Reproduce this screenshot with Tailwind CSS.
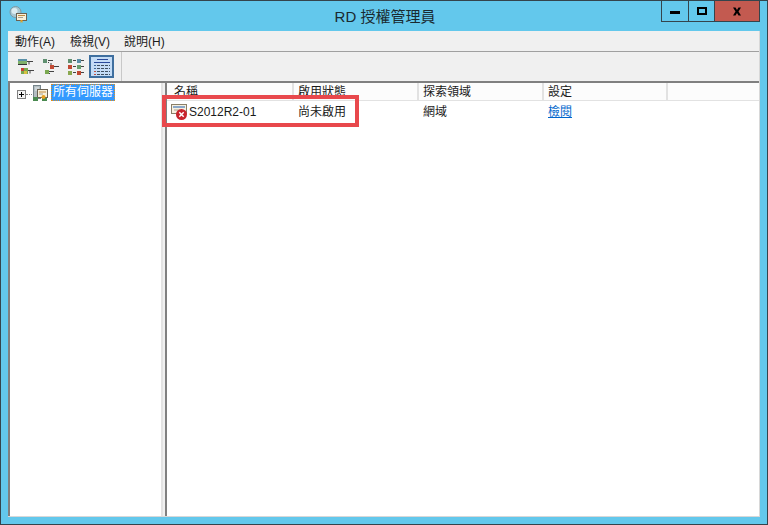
<!DOCTYPE html>
<html lang="zh-Hant">
<head>
    <meta charset="UTF-8">
    <title>RD 授權管理員</title>
    <script src="https://cdn.jsdelivr.net/npm/@tailwindcss/browser@4"></script>
</head>
<body class="overflow-hidden bg-[#63c8ec]">
<div class="relative w-[768px] h-[525px] border border-[#34444c] bg-[#63c8ec] flex flex-col font-['Liberation_Sans','Noto_Sans_CJK_TC',sans-serif] text-[12px] text-[#1a1a1a]">

    <!-- title bar -->
    <div class="h-[30px] shrink-0 flex pl-[8px]">
        <svg class="w-[18px] h-[18px] mt-[5px] shrink-0" viewBox="0 0 18 18">
            <circle cx="6.500" cy="6" r="5.500" fill="#a9c8d2" stroke="#7d99a3"/>
            <circle cx="5.500" cy="5" r="3" fill="#dcecf0"/>
            <rect x="7.500" y="7.500" width="10" height="7" fill="#f7f0da" stroke="#6b6252"/>
            <path d="M9 9.500h7" stroke="#c08a40"/>
            <path d="M9 11.500h5" stroke="#a8a090"/>
            <path d="M11.500 14h2v3l-1-1-1 1z" fill="#e8a020"/>
        </svg>
        <div class="flex-1 text-center text-[15px] leading-[31px] pl-[82px] text-[#1a2a30]">RD 授權管理員</div>
        <div class="flex h-[21px] border border-t-0 border-[#34444c] mr-[7px]">
            <div class="w-[27px] flex items-center justify-center border-r border-[#34444c]"><div class="w-[10px] h-[3px] mt-[2px] bg-black"></div></div>
            <div class="w-[26px] flex items-center justify-center border-r border-[#34444c]"><div class="w-[10px] h-[8px] border-2 border-black"></div></div>
            <div class="w-[44px] bg-[#c35a50] flex items-center justify-center">
                <svg class="w-[10px] h-[9px]" viewBox="0 0 10 9"><path d="M1 .5h2.500L5 3l1.500-2.500H9L6.500 4.500 9 8.500H6.500L5 6 3.500 8.500H1l2.500-4z" fill="#000"/></svg>
            </div>
        </div>
    </div>

    <!-- client area -->
    <div class="flex-1 mx-[7px] mb-[7px] bg-[#f0f0f0] flex flex-col border-b border-r border-[#d8d8d8]">
        <div class="h-[21px] shrink-0 flex items-center pl-[7px] pt-[2px] border-b border-[#a0a0a0] text-[12px]">
            <span class="w-[55px]">動作(A)</span>
            <span class="w-[54px]">檢視(V)</span>
            <span>說明(H)</span>
        </div>

        <div class="h-[31px] shrink-0 flex items-center pl-[5px] border-b-2 border-[#808080]">
            <div class="w-[25px] h-[23px] flex items-center justify-center">
                <svg class="w-[16px] h-[16px]" viewBox="0 0 16 16">
                    <rect x="0" y="0" width="9" height="2" fill="#5a90a8"/><rect x="0" y="2" width="9" height="3" fill="#7fb06a"/><rect x="0" y="5" width="9" height="1" fill="#333"/>
                    <path d="M9 2.500h6M11 2.500v3" stroke="#444"/>
                    <rect x="3" y="9" width="7" height="6" fill="#7aa850"/><rect x="3" y="9" width="3" height="3" fill="#c84030"/><rect x="6" y="12" width="3" height="3" fill="#d8c040"/>
                    <path d="M10 11.500h6M12 11.500v3" stroke="#444"/>
                </svg>
            </div>
            <div class="w-[25px] h-[23px] flex items-center justify-center">
                <svg class="w-[16px] h-[16px]" viewBox="0 0 16 16">
                    <rect x="0" y="0" width="4" height="4" fill="#5f8f70"/><path d="M5 1.500h5M5 3.500h1" stroke="#444"/>
                    <rect x="7" y="6" width="4" height="4" fill="#c24a34"/><path d="M11 7.500h5M8 4v2" stroke="#444"/>
                    <rect x="2" y="11" width="4" height="4" fill="#7aa850"/><path d="M6 12.500h5M6 14.500h1" stroke="#444"/>
                </svg>
            </div>
            <div class="w-[26px] h-[23px] flex items-center justify-center">
                <svg class="w-[16px] h-[16px]" viewBox="0 0 16 16">
                    <rect x="0" y="0" width="4" height="4" fill="#5f8f70"/><path d="M5 1.500h3" stroke="#444"/><rect x="9" y="0" width="4" height="4" fill="#5a90a8"/><path d="M13 1.500h3" stroke="#444"/>
                    <rect x="0" y="6" width="4" height="4" fill="#c24a34"/><path d="M5 7.500h3" stroke="#444"/><rect x="9" y="6" width="4" height="4" fill="#6aa070"/><path d="M13 7.500h3" stroke="#444"/>
                    <rect x="0" y="12" width="4" height="4" fill="#8aa850"/><path d="M5 13.500h3" stroke="#444"/><rect x="9" y="12" width="4" height="4" fill="#c24a34"/><path d="M13 13.500h3" stroke="#444"/>
                </svg>
            </div>
            <div class="w-[25px] h-[23px] bg-[#c4dcf6] border-2 border-[#3f6f9f] flex items-center justify-center">
                <svg class="w-[16px] h-[16px]" viewBox="0 0 16 16">
                    <path d="M3 .5h11" stroke="#2a4a9a"/><path d="M0 3.500h16" stroke="#2a4a9a"/>
                    <path d="M0 6.500h2M0 9.500h2" stroke="#3a6a9a"/><path d="M0 12.500h2" stroke="#c05040"/><path d="M0 15.500h2" stroke="#c05040"/>
                    <path d="M3 6.500h13M3 9.500h13M3 12.500h13M3 15.500h13" stroke="#405060" stroke-dasharray="3 1"/>
                </svg>
            </div>
            <div class="ml-[7px] h-[29px] w-px bg-[#c8c8c8]"></div>
        </div>

        <div class="flex-1 flex min-h-0">
            <!-- tree -->
            <div class="w-[155px] shrink-0 bg-white border-l-2 border-r-2 border-r-[#e3e3e3] border-l-[#808080] flex items-start pl-[7px]">
                <div class="w-[9px] h-[9px] mt-[7px] border border-[#808080] bg-[#f4f4f4] relative shrink-0">
                    <div class="absolute left-[1px] right-[1px] top-[3px] h-px bg-black"></div>
                    <div class="absolute top-[1px] bottom-[1px] left-[3px] w-px bg-black"></div>
                </div>
                <div class="w-[6px] mt-[11px] border-t border-dotted border-[#808080]"></div>
                <svg class="w-[16px] h-[16px] shrink-0 mt-[2px]" viewBox="0 0 16 16">
                    <rect x="1.500" y=".5" width="7" height="13" fill="#b4bec2" stroke="#76848a"/>
                    <path d="M3 3h4M3 5h4" stroke="#e6ecee"/>
                    <rect x="5.500" y="4.500" width="10" height="8" fill="#f7f0da" stroke="#6b6252"/>
                    <path d="M7 7h7" stroke="#c08a40"/><path d="M7 9h4" stroke="#a8a090"/>
                    <rect x="1" y="12" width="5" height="4" fill="#4a8a50"/>
                    <rect x="10" y="13" width="5" height="3" fill="#4a8a50"/>
                    <circle cx="11.500" cy="12" r="2" fill="#e8a020"/>
                </svg>
                <span class="ml-[3px] mt-[1px] h-[17px] w-[64px] shrink-0 bg-[#3399ff] text-white leading-[15px] border border-dotted border-[#e09020] text-center text-[12px]">所有伺服器</span>
            </div>

            <!-- splitter -->
            <div class="w-[2px] shrink-0 bg-[#f0f0f0]"></div>

            <!-- list -->
            <div class="flex-1 min-w-0 bg-white border-l-2 border-[#808080] flex flex-col">
                <div class="h-[18px] shrink-0 flex bg-[#fcfcfc] border-b border-[#e2e2e2] leading-[19px] overflow-hidden">
                    <div class="w-[127px] pl-[7px] border-r-2 border-[#e2e2e2]">名稱</div>
                    <div class="w-[125px] pl-[4px] border-r-2 border-[#e2e2e2]">啟用狀態</div>
                    <div class="w-[125px] pl-[4px] border-r-2 border-[#e2e2e2]">探索領域</div>
                    <div class="w-[124px] pl-[4px] border-r-2 border-[#e2e2e2]">設定</div>
                </div>
                <div class="h-[22px] shrink-0 flex items-center">
                    <div class="w-[125px] pl-[4px] flex items-center">
                        <div class="relative w-[16px] h-[16px] shrink-0">
                            <svg class="w-[16px] h-[16px]" viewBox="0 0 16 16">
                                <rect x=".5" y=".5" width="15" height="9" fill="#f7f0e0" stroke="#8a7f68"/>
                                <path d="M2 3h12" stroke="#8aa8c8" stroke-width="2"/>
                                <path d="M3 6h6" stroke="#a8a090"/>
                            </svg>
                            <svg class="absolute left-[5px] top-[5px] w-[11px] h-[11px]" viewBox="0 0 11 11">
                                <circle cx="5.500" cy="5.500" r="5.500" fill="#c8242c"/>
                                <path d="M3.300 3.300l4.400 4.400M7.700 3.300l-4.400 4.400" stroke="#fff" stroke-width="1.500"/>
                            </svg>
                        </div>
                        <span class="ml-[2px]">S2012R2-01</span>
                    </div>
                    <div class="w-[125px] pl-[6px]">尚未啟用</div>
                    <div class="w-[125px] pl-[6px]">網域</div>
                    <div class="w-[125px] pl-[6px] text-[#0066cc] underline">檢閱</div>
                </div>
            </div>
        </div>
    </div>

    <!-- annotation -->
    <div class="absolute left-[161px] top-[94px] w-[197px] h-[32px] border-4 border-[#e8484c]"></div>
</div>
</body>
</html>
